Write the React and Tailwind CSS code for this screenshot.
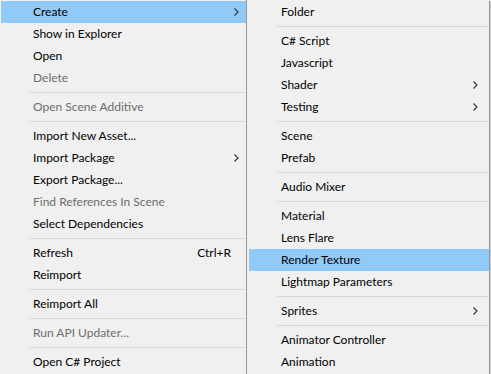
const Arrow = () => (
  <svg width="5" height="8" viewBox="0 0 5 8" className="block">
    <path d="M0.5 0.5 L4 4 L0.5 7.5" fill="none" stroke="#333" strokeWidth="1.1" />
  </svg>
);

const left = [
  { t: "Create", sub: true, hl: true },
  { t: "Show in Explorer" },
  { t: "Open" },
  { t: "Delete", dis: true },
  { sep: true },
  { t: "Open Scene Additive", dis: true },
  { sep: true },
  { t: "Import New Asset..." },
  { t: "Import Package", sub: true },
  { t: "Export Package..." },
  { t: "Find References In Scene", dis: true },
  { t: "Select Dependencies" },
  { sep: true },
  { t: "Refresh", sc: "Ctrl+R" },
  { t: "Reimport" },
  { sep: true },
  { t: "Reimport All" },
  { sep: true },
  { t: "Run API Updater...", dis: true },
  { sep: true },
  { t: "Open C# Project" },
];

const right = [
  { t: "Folder" },
  { sep: true },
  { t: "C# Script" },
  { t: "Javascript" },
  { t: "Shader", sub: true },
  { t: "Testing", sub: true },
  { sep: true },
  { t: "Scene" },
  { t: "Prefab" },
  { sep: true },
  { t: "Audio Mixer" },
  { sep: true },
  { t: "Material" },
  { t: "Lens Flare" },
  { t: "Render Texture", hl: true },
  { t: "Lightmap Parameters" },
  { sep: true },
  { t: "Sprites", sub: true },
  { sep: true },
  { t: "Animator Controller" },
  { t: "Animation" },
];

function Item({ it, arrowRight }) {
  if (it.sep) {
    return (
      <div className="h-[7px] flex items-center pl-[28px] pr-[1px]">
        <div className="h-px w-full bg-[#d7d7d7]" />
      </div>
    );
  }
  return (
    <div
      className={
        "h-[22px] flex items-center pl-[32px] relative " +
        (it.hl ? "bg-[#91c9f7] " : "") +
        (it.dis ? "text-[#6d6d6d]" : "text-black")
      }
    >
      <span className="leading-none">{it.t}</span>
      {it.sc && (
        <span className="absolute right-[15px] leading-none">{it.sc}</span>
      )}
      {it.sub && (
        <span className={"absolute top-[7px] " + arrowRight}>
          <Arrow />
        </span>
      )}
    </div>
  );
}

export default function App() {
  return (
    <div
      className="w-[491px] h-[374px] bg-[#f0f0f0] flex overflow-hidden text-[12px]"
      style={{ fontFamily: 'Lato, "Noto Sans", sans-serif' }}
    >
      <div className="w-[246px] pl-px pt-px flex flex-col">
        {left.map((it, i) => (
          <Item key={i} it={it} arrowRight="right-[7px]" />
        ))}
      </div>
      <div className="w-[245px] border-l border-[#979797] pl-[2px] pt-px flex">
        <div className="w-[240px] flex flex-col">
          {right.map((it, i) => (
            <Item key={i} it={it} arrowRight="right-[11px]" />
          ))}
        </div>
        <div className="w-px bg-[#979797]" />
        <div className="w-px bg-[#c8c8c8]" />
      </div>
    </div>
  );
}
